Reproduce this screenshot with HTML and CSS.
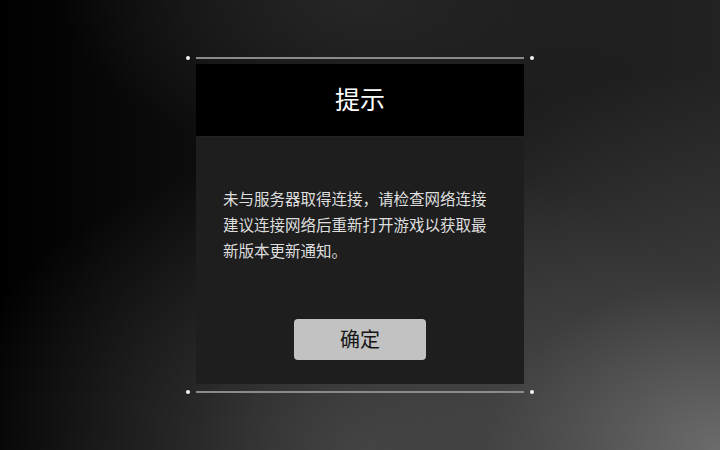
FILE: index.html
```html
<!DOCTYPE html>
<html>
<head>
<meta name="viewport" content="width=device-width, initial-scale=1">
<link rel="stylesheet" href="styles.css">
</head>
<body>

<div class="screen">
  <div class="dialog">
    <div class="rail">
      <span class="dot"></span>
      <span class="line"></span>
      <span class="dot"></span>
    </div>

    <div class="panel">
      <div class="head">提示</div>
      <div class="content">
        <p class="msg">未与服务器取得连接，请检查网络连接建议连接网络后重新打开游戏以获取最新版本更新通知。</p>
        <button type="button" class="okbtn">确定</button>
      </div>
    </div>

    <div class="rail bottom">
      <span class="dot"></span>
      <span class="line"></span>
      <span class="dot"></span>
    </div>
  </div>
</div>

</body>
</html>
```

FILE: styles.css
```css
html, body {
  margin: 0;
  height: 100%;
}

body {
  font-family: "Noto Sans CJK SC", "Noto Sans", sans-serif;
  background: #000;
}

.screen {
  width: 720px;
  height: 450px;
  overflow: hidden;
  background:
    radial-gradient(ellipse 520px 380px at 100% 100%, rgba(120,120,120,0.85) 0%, rgba(80,80,80,0.5) 45%, rgba(0,0,0,0) 100%),
    radial-gradient(ellipse 420px 300px at 50% 100%, rgba(90,90,90,0.6) 0%, rgba(0,0,0,0) 100%),
    radial-gradient(ellipse 300px 160px at 50% 0%, #262626 0%, rgba(0,0,0,0) 100%),
    linear-gradient(to right, #000 0%, #0e0e0e 30%, #181818 60%, #222 100%);
}

.dialog {
  width: 348px;
  margin: 0 auto;
  padding-top: 56px;
}

.rail {
  display: flex;
  align-items: center;
  height: 4px;
}

.rail.bottom {
  margin-top: 6px;
}

.dot {
  width: 4px;
  height: 4px;
  border-radius: 50%;
  background: #f4f4f4;
}

.line {
  flex: 1;
  height: 2px;
  margin: 0 6px;
  background: #8a8a8a;
}

.panel {
  margin: 4px 10px 0 10px;
}

.head {
  height: 72px;
  line-height: 68px;
  background: #000;
  color: #fff;
  font-size: 25px;
  text-align: center;
}

.content {
  height: 248px;
  box-sizing: border-box;
  padding: 48px 0 0 27px;
  background: #1e1e1e;
  border-top: 1px solid #232323;
}

.msg {
  width: 270px;
  margin: 0;
  font-size: 15.5px;
  line-height: 26px;
  color: #dedede;
}

.okbtn {
  display: block;
  width: 132px;
  height: 41px;
  margin: 56px 0 0 71px;
  padding: 0 0 2px 0;
  border: none;
  border-radius: 4px;
  background: #c2c2c2;
  color: #161616;
  font-family: "Noto Sans CJK SC", "Noto Sans", sans-serif;
  font-size: 20px;
  cursor: pointer;
}
```
